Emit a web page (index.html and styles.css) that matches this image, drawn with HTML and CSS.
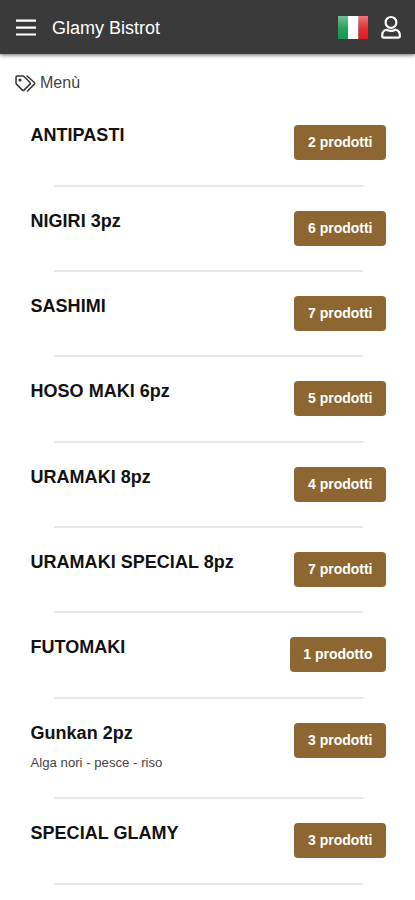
FILE: index.html
```html
<!DOCTYPE html>
<html lang="it">
<head>
<meta charset="utf-8">
<title>Glamy Bistrot</title>
<link rel="stylesheet" href="styles.css">
</head>
<body>
<header class="topbar">
  <svg class="burger" width="20" height="18" viewBox="0 0 20 18"><path d="M0 2.700h20M0 9.600h20M0 16.500h20" stroke="#fff" stroke-width="2.200"/></svg>
  <h1 class="brand">Glamy Bistrot</h1>
  <svg class="flag" width="30" height="23" viewBox="0 0 30 23">
    <defs><linearGradient id="shine" x2="0" y2="1"><stop offset="0" stop-color="#fff" stop-opacity=".4"/><stop offset=".55" stop-color="#fff" stop-opacity=".08"/><stop offset="1" stop-color="#fff" stop-opacity="0"/></linearGradient></defs>
    <path d="M0 0h10v23H0z" fill="#16964f"/><path d="M10 0h10.500v23H10z" fill="#fff"/><path d="M20.500 0H30v23h-9.500z" fill="#e01b22"/><path d="M0 0h30v23H0z" fill="url(#shine)"/>
  </svg>
  <svg class="user" width="20" height="24" viewBox="0 0 20 24" fill="none" stroke="#fff" stroke-width="2.200"><circle cx="10" cy="7.400" r="5.400"/><path d="M5.500 14.800C2.600 15.500 1.200 17.700 1.200 20.200v.8q0 1.700 1.700 1.700h14.200q1.700 0 1.700-1.700v-.8c0-2.500-1.400-4.700-4.300-5.400-1.500.8-2.700 1.100-4.500 1.100s-3-.3-4.500-1.100z"/></svg>
</header>
<main>
  <div class="crumb">
    <svg width="21" height="17" viewBox="0 0 21 17" fill="none" stroke="#333" stroke-width="1.500" stroke-linejoin="round" stroke-linecap="round"><path d="M1 2.200Q1 1 2.200 1h5.600q.7 0 1.200.5l6 6q.8.8 0 1.600l-6 6q-.8.8-1.600 0l-5.900-6Q1 8.600 1 7.900z"/><path d="M12 1l7.400 6.500q.9.800 0 1.600L12.500 16"/><circle cx="5" cy="5" r=".8" fill="#333"/></svg>
    <span>Menù</span>
  </div>
  <section class="list">
    <article class="row"><h2>ANTIPASTI</h2><span class="count">2 prodotti</span></article>
    <article class="row"><h2>NIGIRI 3pz</h2><span class="count">6 prodotti</span></article>
    <article class="row"><h2>SASHIMI</h2><span class="count">7 prodotti</span></article>
    <article class="row"><h2>HOSO MAKI 6pz</h2><span class="count">5 prodotti</span></article>
    <article class="row"><h2>URAMAKI 8pz</h2><span class="count">4 prodotti</span></article>
    <article class="row"><h2>URAMAKI SPECIAL 8pz</h2><span class="count">7 prodotti</span></article>
    <article class="row"><h2>FUTOMAKI</h2><span class="count">1 prodotto</span></article>
    <article class="row tall"><div><h2>Gunkan 2pz</h2><p>Alga nori - pesce - riso</p></div><span class="count">3 prodotti</span></article>
    <article class="row"><h2>SPECIAL GLAMY</h2><span class="count">3 prodotti</span></article>
  </section>
</main>
</body>
</html>
```
FILE: styles.css
```css
* { box-sizing: border-box; }
body {
  margin: 0;
  height: 900px;
  overflow: hidden;
  background: #fff;
  color: #111;
  font-family: "Liberation Sans", Arial, sans-serif;
}
h1, h2, p { margin: 0; }
svg { display: block; flex: none; }
.topbar {
  display: flex;
  align-items: center;
  height: 54px;
  padding: 0 14px 0 15.500px;
  background: #3a3a3a;
  box-shadow: 0 1px 4px rgba(0, 0, 0, .6);
}
.brand {
  flex: 1;
  margin-left: 16.500px;
  padding-top: 2px;
  color: #fff;
  font-size: 18px;
  font-weight: 400;
}
.flag { margin-right: 13px; }
.crumb {
  display: flex;
  align-items: center;
  gap: 4px;
  height: 56px;
  padding: 2px 15px 0;
  color: #444;
  font-size: 16px;
}
.row {
  display: flex;
  justify-content: space-between;
  align-items: flex-start;
  position: relative;
  height: 85.350px;
  padding: 15.200px 29px 0 30.500px;
}
.row::after {
  content: "";
  position: absolute;
  left: 54px;
  right: 52px;
  bottom: 8.700px;
  height: 2px;
  background: #e7e7e7;
}
.tall { height: 100.600px; }
h2 {
  font-size: 18px;
  line-height: 20px;
  letter-spacing: .03px;
}
.row p {
  margin-top: 12px;
  color: #444;
  font-size: 13.200px;
  line-height: 16px;
}
.count {
  height: 35px;
  padding: 0 13.500px;
  border-radius: 4px;
  background: #8d6631;
  color: #fff;
  font-size: 14px;
  font-weight: 700;
  line-height: 35px;
}
```
